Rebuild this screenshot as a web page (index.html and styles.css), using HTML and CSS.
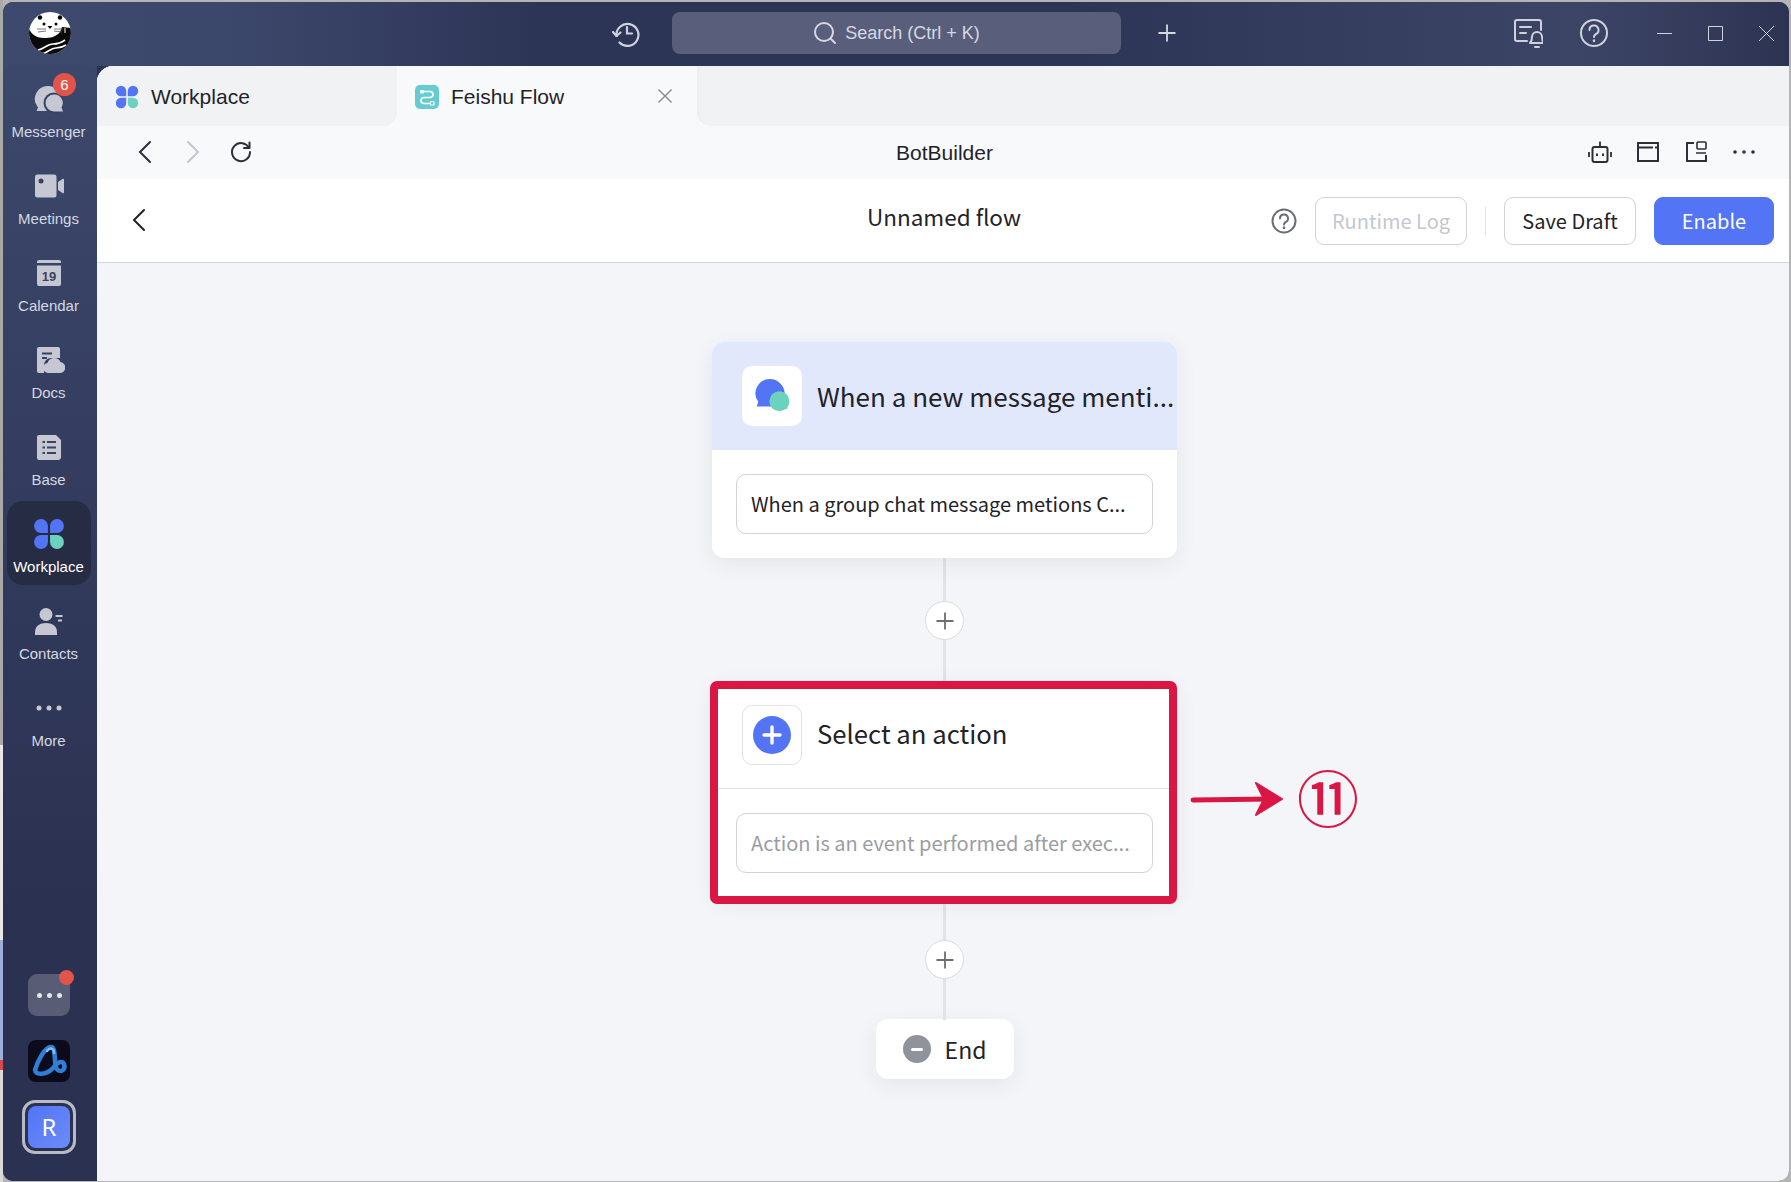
FILE: index.html
```html
<!DOCTYPE html>
<html lang="en">
<head>
<meta charset="UTF-8" />
<title>Feishu Flow - BotBuilder</title>
<link rel="stylesheet" href="styles.css">
</head>
<body>

<svg class="defs" width="0" height="0" aria-hidden="true">
  <symbol id="clover" viewBox="1 1 30 30">
    <path fill="#5274f5" d="M15 15H8.500A6.500 6.500 0 1 1 15 8.500Z" />
    <path fill="#5274f5" d="M17 15V8.500A6.500 6.500 0 1 1 23.500 15Z" />
    <path fill="#5274f5" d="M15 17V23.500A6.500 6.500 0 1 1 8.500 17Z" />
    <path fill="#6bd3bd" d="M17 17H23.500A6.500 6.500 0 1 1 17 23.500Z" />
  </symbol>
  <symbol id="chevron-left" viewBox="0 0 24 24">
    <path fill="none" stroke="currentColor" stroke-width="2" stroke-linecap="round" d="M17 2 7 12l10 10" />
  </symbol>
  <symbol id="plus" viewBox="0 0 20 20">
    <path fill="none" stroke="currentColor" stroke-width="1.800" d="M10 1.500v17M1.500 10h17" />
  </symbol>
  <clipPath id="logo-clip">
    <circle cx="21" cy="21" r="21" />
  </clipPath>
</svg>

<div class="window">

  <!-- Title bar -->
  <header class="titlebar">
    <svg class="logo" viewBox="0 0 42 42">
      <g clip-path="url(#logo-clip)">
        <rect width="42" height="42" fill="#fff" />
        <path fill="#0a0a0a" d="M0 17c3 6 8 9 15 9 6 0 12-1 16-6l2-5 9 1v26H0Z" />
        <path fill="#fff" d="M9 13c1-7 6-11 12-11s11 4 11 11c0 7-5 12-11 12S8 20 9 13Z" />
        <circle cx="11" cy="5.500" r="2.200" fill="#0a0a0a" />
        <circle cx="31" cy="5.500" r="2.200" fill="#0a0a0a" />
        <circle cx="15" cy="12" r="1.500" fill="#0a0a0a" />
        <circle cx="27" cy="12" r="1.500" fill="#0a0a0a" />
        <path fill="#0a0a0a" d="M18.500 14h5l-2.500 3Z" />
        <path fill="none" stroke="#555" stroke-width=".8" d="M8 17h9M9 20l8-1M34 17h-9M33 20l-8-1" />
        <path fill="none" stroke="#fff" stroke-width="1.600" d="M9 38c6-1 9-6 15-6 5 0 8-1 12-4M13 42c5-1 9-6 14-6 4 0 7-1 10-3" />
        <path fill="none" stroke="#fff" stroke-width="1" d="M36 16v5" />
      </g>
    </svg>
    <svg class="history-icon" viewBox="0 0 30 30" fill="none" stroke="#cfd2dc" stroke-width="2.200" stroke-linecap="round">
      <path d="M5.500 18A11 11 0 1 1 8.500 24.500" />
      <path d="M2 14l3.500 4 4-3.500" stroke-linejoin="round" />
      <path d="M16 9v6.500h5" />
    </svg>
    <div class="search">
      <svg viewBox="0 0 24 24" fill="none" stroke="#d5d8e2" stroke-width="2" stroke-linecap="round">
        <circle cx="11" cy="11" r="9" />
        <path d="M18 18l4 4" />
      </svg>
      <span>Search (Ctrl + K)</span>
    </div>
    <svg class="new-icon" viewBox="0 0 20 20">
      <use href="#plus" color="#d5d8e2" />
    </svg>
    <div class="titlebar-right">
      <svg class="bar-icon" viewBox="0 0 30 30" fill="none" stroke="#cfd2dc" stroke-width="2" stroke-linecap="round" stroke-linejoin="round">
        <path d="M14 23H4a2 2 0 0 1-2-2V4a2 2 0 0 1 2-2h22a2 2 0 0 1 2 2v8" />
        <path d="M7 9h11M7 15h6" />
        <path d="M17 25c1-1 2-2 2-6a5 5 0 0 1 10 0c0 4 1 5 2 6ZM22 29h4" />
      </svg>
      <svg class="bar-icon help" viewBox="0 0 30 30" fill="none" stroke="#cfd2dc" stroke-width="2" stroke-linecap="round">
        <circle cx="15" cy="15" r="13" />
        <path d="M10.500 12a4.500 4.500 0 1 1 6.500 4c-1.500.8-2 1.500-2 3" />
        <path d="M15 22.500v.5" stroke-width="2.400" />
      </svg>
      <svg class="win-btn minimize" viewBox="0 0 15 15" fill="none" stroke="#cfd2dc"><path d="M0 7.500h15" /></svg>
      <svg class="win-btn" viewBox="0 0 15 15" fill="none" stroke="#cfd2dc"><path d="M.5.500h14v14H.500Z" /></svg>
      <svg class="win-btn" viewBox="0 0 15 15" fill="none" stroke="#cfd2dc"><path d="M0 0l15 15M15 0 0 15" /></svg>
    </div>
  </header>

  <div class="below">

    <!-- Left navigation -->
    <nav class="sidebar">
      <div class="nav-item">
        <svg class="nav-icon" viewBox="0 0 32 32">
          <path fill="#c5c8d3" d="M15 3A13 13 0 0 0 5 24.500L3.500 28H16a13 13 0 0 0 12-12A13 13 0 0 0 15 3Z" />
          <circle cx="21" cy="20" r="10.500" fill="#39425f" />
          <path fill="#c5c8d3" d="M21 11.500a8.500 8.500 0 0 0 0 17h9l-1.500-4A8.500 8.500 0 0 0 21 11.500Z" />
        </svg>
        <span class="nav-label">Messenger</span>
        <span class="badge">6</span>
      </div>
      <div class="nav-item">
        <svg class="nav-icon" viewBox="0 0 32 32">
          <path fill="#c5c8d3" d="M2 7a2.500 2.500 0 0 1 2.500-2.500H21A2.500 2.500 0 0 1 23.500 7v18a2.500 2.500 0 0 1-2.500 2.500H4.500A2.500 2.500 0 0 1 2 25Z" />
          <path fill="#c5c8d3" d="M25 12l4.500-3c1-.6 1.500 0 1.500 1v12c0 1-.5 1.600-1.500 1L25 20Z" />
          <circle cx="8" cy="11" r="2.500" fill="#39425f" />
        </svg>
        <span class="nav-label">Meetings</span>
      </div>
      <div class="nav-item">
        <svg class="nav-icon" viewBox="0 0 32 32">
          <path fill="#c5c8d3" d="M4 5a2 2 0 0 1 2-2h20a2 2 0 0 1 2 2v1H4ZM4 8.500h24V27a2 2 0 0 1-2 2H6a2 2 0 0 1-2-2Z" />
          <text class="cal-day" x="16" y="24" text-anchor="middle">19</text>
        </svg>
        <span class="nav-label">Calendar</span>
      </div>
      <div class="nav-item">
        <svg class="nav-icon" viewBox="0 0 32 32">
          <path fill="#c5c8d3" d="M4 5a2 2 0 0 1 2-2h19a2 2 0 0 1 2 2v9H18a7 7 0 0 0-7 7v8H6a2 2 0 0 1-2-2Z" />
          <path fill="#c5c8d3" d="M15 29a5 5 0 0 1-.5-9.900A7 7 0 0 1 27.500 18 5.500 5.500 0 0 1 26 29Z" />
          <path stroke="#39425f" stroke-width="2" d="M9 9.500h10M9 14h5" />
        </svg>
        <span class="nav-label">Docs</span>
      </div>
      <div class="nav-item">
        <svg class="nav-icon" viewBox="0 0 32 32">
          <path fill="#c5c8d3" d="M6 4a2 2 0 0 0-2 2v21a2 2 0 0 0 2 2h19a3 3 0 0 0 3-3V9l-5-5Z" />
          <path stroke="#39425f" stroke-width="2.200" d="M9.500 11h2.500M14 11h9M9.500 16.500h2.500M14 16.500h9M9.500 22h2.500M14 22h9" />
        </svg>
        <span class="nav-label">Base</span>
      </div>
      <div class="nav-item active">
        <svg class="nav-icon"><use href="#clover" /></svg>
        <span class="nav-label">Workplace</span>
      </div>
      <div class="nav-item">
        <svg class="nav-icon" viewBox="0 0 32 32">
          <circle cx="13" cy="9.500" r="6.500" fill="#c5c8d3" />
          <path fill="#c5c8d3" d="M2 30v-3c0-6 5-9 11-9s11 3 11 9v3Z" />
          <path stroke="#c5c8d3" stroke-width="2" d="M22.500 11h7M25 15.500h4" />
        </svg>
        <span class="nav-label">Contacts</span>
      </div>
      <div class="nav-item">
        <svg class="nav-icon" viewBox="0 0 32 32" fill="#c5c8d3">
          <circle cx="6" cy="16" r="2.500" />
          <circle cx="16" cy="16" r="2.500" />
          <circle cx="26" cy="16" r="2.500" />
        </svg>
        <span class="nav-label">More</span>
      </div>

      <div class="dock">
        <div class="dock-more">
          <i></i><i></i><i></i>
          <span class="dock-dot"></span>
        </div>
        <svg class="dock-app" viewBox="0 0 42 42">
          <rect width="42" height="42" rx="8" fill="#0b0b1c" />
          <path fill="none" stroke="#2f7fd6" stroke-width="4.500" stroke-linecap="round" d="M7 30C10 20 17 7 23 7c5 0 3 14 5 20 1 4 5 5 7 3 3-3 1-8-2-8-4 0-6 4-10 8-5 4-15 6-16 0Z" />
          <path fill="none" stroke="#79c0f5" stroke-width="2.500" stroke-linecap="round" d="M19 11c3-4 7-3 7 2" />
        </svg>
        <div class="avatar-ring">
          <div class="avatar">R</div>
        </div>
      </div>
    </nav>

    <main class="main">

      <!-- Tabs -->
      <div class="tabs">
        <div class="tab">
          <svg class="tab-icon"><use href="#clover" /></svg>
          <span>Workplace</span>
        </div>
        <div class="tab tab-active">
          <svg class="tab-icon" viewBox="0 0 24 24">
            <rect width="24" height="24" rx="5" fill="#65ccd1" />
            <path fill="none" stroke="#fff" stroke-width="1.700" d="M9 6.500h6a3 3 0 0 1 0 6H9a3 3 0 0 0 0 6h6" />
            <rect x="5" y="5" width="4" height="3.500" rx=".8" fill="#fff" />
            <rect x="15.500" y="16.500" width="3.500" height="3.500" rx=".6" fill="#65ccd1" stroke="#fff" stroke-width="1.200" />
          </svg>
          <span>Feishu Flow</span>
          <svg class="tab-close" viewBox="0 0 14 14" fill="none" stroke="#85888e" stroke-width="1.400"><path d="M.5.500l13 13M13.500.500l-13 13" /></svg>
        </div>
        <div class="tabs-rest"></div>
      </div>

      <!-- Browser toolbar -->
      <div class="toolbar">
        <div class="toolbar-left">
          <svg class="tool-icon back"><use href="#chevron-left" /></svg>
          <svg class="tool-icon forward"><use href="#chevron-left" /></svg>
          <svg class="tool-icon" viewBox="0 0 24 24" fill="none" stroke="currentColor" stroke-width="2" stroke-linecap="round">
            <path d="M20 8a9 9 0 1 0 1 4" />
            <path d="M20.500 2.500V8H15" stroke-linejoin="round" />
          </svg>
        </div>
        <div class="toolbar-title">BotBuilder</div>
        <div class="toolbar-right">
          <svg class="tool-icon" viewBox="0 0 24 24" fill="none" stroke="currentColor" stroke-width="2">
            <rect x="4.500" y="7" width="15" height="15" rx="2" />
            <path d="M12 1.500V7M1 12v5M23 12v5" stroke-width="1.800" />
            <path d="M9 14.500v.5M15 14.500v.5" stroke-linecap="square" stroke-width="2" />
          </svg>
          <svg class="tool-icon" viewBox="0 0 24 24" fill="none" stroke="currentColor" stroke-width="2">
            <rect x="2" y="3" width="20" height="18" />
            <path d="M2 7.500h15M19 7.500h3" />
          </svg>
          <svg class="tool-icon" viewBox="0 0 24 24" fill="none" stroke="currentColor" stroke-width="2">
            <path d="M10 3H3v18h19v-6" />
            <rect x="13" y="2" width="9" height="7" rx="1" stroke-width="1.600" />
            <path d="M12 13h10" stroke-width="1.600" />
          </svg>
          <svg class="tool-icon" viewBox="0 0 24 24" fill="currentColor">
            <circle cx="3" cy="12" r="1.800" />
            <circle cx="12" cy="12" r="1.800" />
            <circle cx="21" cy="12" r="1.800" />
          </svg>
        </div>
      </div>

      <!-- Flow header -->
      <div class="flow-header">
        <svg class="flow-back"><use href="#chevron-left" /></svg>
        <div class="flow-name">Unnamed flow</div>
        <div class="flow-actions">
          <svg class="flow-help" viewBox="0 0 26 26" fill="none" stroke="#6b6e75" stroke-width="2" stroke-linecap="round">
            <circle cx="13" cy="13" r="11.500" />
            <path d="M9 10.500a4 4 0 1 1 5.800 3.500c-1.300.7-1.800 1.300-1.800 2.500" />
            <path d="M13 19.500v.5" stroke-width="2.400" />
          </svg>
          <button class="btn btn-log">Runtime Log</button>
          <span class="divider"></span>
          <button class="btn btn-draft">Save Draft</button>
          <button class="btn btn-primary">Enable</button>
        </div>
      </div>

      <!-- Flow canvas -->
      <div class="canvas">
        <section class="node">
          <div class="node-head node-head-trigger">
            <div class="node-icon">
              <svg viewBox="0 0 36 36">
                <path fill="#5274f5" d="M16 2a13.500 13.500 0 0 0-11 21.500L3.500 28H28a13.500 13.500 0 0 0 2-12A14 14 0 0 0 16 2Z" />
                <circle cx="25" cy="23" r="9.500" fill="#6bd3bd" />
                <path fill="#6bd3bd" d="M27 30h6l-1-4Z" />
              </svg>
            </div>
            <div class="node-title">When a new message menti...</div>
          </div>
          <div class="node-body">
            <div class="node-field">When a group chat message metions C...</div>
          </div>
        </section>

        <div class="connector">
          <button class="add-step"><svg viewBox="0 0 20 20"><use href="#plus" /></svg></button>
        </div>

        <section class="node">
          <div class="node-head node-head-empty">
            <div class="node-icon node-icon-outline">
              <svg viewBox="0 0 38 38">
                <circle cx="19" cy="19" r="19" fill="#5274f5" />
                <path stroke="#fff" stroke-width="3.400" stroke-linecap="round" d="M19 11v16M11 19h16" />
              </svg>
            </div>
            <div class="node-title">Select an action</div>
          </div>
          <div class="node-body">
            <div class="node-field node-field-empty">Action is an event performed after exec...</div>
          </div>
          <div class="highlight"></div>
          <svg class="note-arrow" viewBox="0 0 94 36" fill="none" stroke="#d91644" stroke-linecap="round" stroke-linejoin="round">
            <path stroke-width="5" d="M3 19 86 18" />
            <path fill="#d91644" stroke-width="2" d="M66 2 92 18 66 34l8-16Z" />
          </svg>
          <span class="note-number">⑪</span>
        </section>

        <div class="connector">
          <button class="add-step"><svg viewBox="0 0 20 20"><use href="#plus" /></svg></button>
        </div>

        <div class="end-node">
          <span class="end-icon"></span>
          <span>End</span>
        </div>
      </div>

    </main>
  </div>
</div>

</body>
</html>
```

FILE: styles.css
```css
* {
  box-sizing: border-box;
}

html, body {
  height: 100%;
}

body {
  margin: 0;
  overflow: hidden;
  padding: 2px 2px 1px 3px;
  font-family: "Liberation Sans", Arial, sans-serif;
  color: #1f2329;
  /* bits of the desktop behind the window, left edge only */
  background:
    linear-gradient(180deg, #a9a9a9 0, #a9a9a9 745px, #e8e8e8 745px, #e8e8e8 940px, #9db0d8 940px, #9db0d8 1060px, #d64a4a 1060px, #d64a4a 1070px, #d9d9d9 1070px) left top / 3px 100% no-repeat,
    #b4b4b4;
}

.defs {
  position: absolute;
}

.window {
  height: 100%;
  display: flex;
  flex-direction: column;
  border-radius: 10px;
  overflow: hidden;
  background: #2b3151;
}

/* Title bar */
.titlebar {
  height: 64px;
  flex: none;
  display: flex;
  align-items: center;
  padding: 0 15px 2px 26px;
  background: linear-gradient(90deg, #3e4a6d 0, #3c486b 12%, #2d3556 30%, #2d3556 60%, #3d4566 88%, #2d3353 100%);
}

.logo {
  width: 42px;
  height: 42px;
  flex: none;
}

.history-icon {
  width: 30px;
  height: 30px;
  flex: none;
  margin-left: 540px;
}

.search {
  width: 449px;
  height: 42px;
  flex: none;
  margin-left: 31px;
  border-radius: 8px;
  background: #595f7a;
  display: flex;
  align-items: center;
  justify-content: center;
  gap: 8px;
  color: #d5d8e2;
  font-size: 18px;
}

.search svg {
  width: 24px;
  height: 24px;
}

.new-icon {
  width: 20px;
  height: 20px;
  flex: none;
  margin-left: 36px;
}

.titlebar-right {
  margin-left: auto;
  display: flex;
  align-items: center;
}

.bar-icon {
  width: 30px;
  height: 30px;
}

.help {
  margin-left: 36px;
  margin-right: 48px;
}

.win-btn {
  width: 15px;
  height: 15px;
  margin-left: 36px;
}

.win-btn.minimize {
  margin-left: 0;
}

/* Left navigation */
.below {
  flex: 1;
  min-height: 0;
  display: flex;
}

.sidebar {
  width: 94px;
  flex: none;
  padding-left: 4px;
  padding-right: 6px;
  display: flex;
  flex-direction: column;
  gap: 3px;
  background: linear-gradient(180deg, #3c486b 0, #2b3151 75%);
}

.nav-item {
  height: 84px;
  flex: none;
  position: relative;
  padding: 17px 1px 0 0;
  border-radius: 16px;
  display: flex;
  flex-direction: column;
  align-items: center;
}

.nav-item.active {
  background: #262c44;
}

.nav-icon {
  width: 32px;
  height: 32px;
  display: block;
}

.nav-label {
  margin-top: 8px;
  line-height: 18px;
  font-size: 15px;
  color: #d5d8e2;
  white-space: nowrap;
}

.active .nav-label {
  color: #fff;
}

.cal-day {
  font: 700 13px "Liberation Sans", Arial, sans-serif;
  fill: #39425f;
}

.badge {
  position: absolute;
  top: 7px;
  left: 46px;
  width: 23px;
  height: 23px;
  border-radius: 50%;
  background: #e25449;
  color: #fff;
  font-size: 15px;
  line-height: 23px;
  text-align: center;
}

.dock {
  margin-top: auto;
  padding: 0 0 27px;
  display: flex;
  flex-direction: column;
  align-items: center;
}

.dock-more {
  width: 42px;
  height: 42px;
  position: relative;
  border-radius: 9px;
  background: #585d75;
  display: flex;
  align-items: center;
  justify-content: center;
  gap: 5px;
}

.dock-more i {
  width: 5px;
  height: 5px;
  border-radius: 50%;
  background: #e6e7ec;
}

.dock-dot {
  position: absolute;
  top: -4px;
  right: -4px;
  width: 15px;
  height: 15px;
  border-radius: 50%;
  background: #e25449;
}

.dock-app {
  width: 42px;
  height: 42px;
  margin-top: 24px;
}

.avatar-ring {
  width: 54px;
  height: 54px;
  margin-top: 18px;
  padding: 3px;
  border: 3px solid #b8bbc5;
  border-radius: 13px;
}

.avatar {
  height: 100%;
  border-radius: 8px;
  background: linear-gradient(135deg, #5274f5, #6d8cf8);
  color: #fff;
  font: 400 24px/42px "Noto Sans", sans-serif;
  text-align: center;
}

/* Main area */
.main {
  flex: 1;
  min-width: 0;
  display: flex;
  flex-direction: column;
  background: #f4f5f8;
  border-radius: 16px 0 0 0;
  overflow: hidden;
}

.tabs {
  height: 60px;
  flex: none;
  display: flex;
  background: #f8f9fb;
}

.tab {
  width: 300px;
  flex: none;
  display: flex;
  align-items: center;
  padding: 2px 0 0 18px;
  gap: 12px;
  background: #f1f2f4;
  border-bottom-right-radius: 14px;
  font-size: 21px;
  color: #1f2329;
}

.tab-active {
  background: #f8f9fb;
  border-radius: 14px 14px 0 0;
  position: relative;
}

.tab-icon {
  width: 24px;
  height: 24px;
  flex: none;
}

.tab-close {
  position: absolute;
  right: 25px;
  top: 23px;
  width: 14px;
  height: 14px;
}

.tabs-rest {
  flex: 1;
  background: #f1f2f4;
  border-bottom-left-radius: 14px;
  box-shadow: inset 6px 0 6px -6px rgba(0, 0, 0, 0.04);
}

.toolbar {
  height: 53px;
  flex: none;
  display: grid;
  grid-template-columns: minmax(0, 1fr) auto minmax(0, 1fr);
  align-items: center;
  padding: 0 33px 2px 36px;
  background: #f8f9fb;
}

.toolbar-left,
.toolbar-right {
  display: flex;
  align-items: center;
  gap: 24px;
  color: #2b2f36;
}

.toolbar-right {
  justify-content: flex-end;
}

.tool-icon {
  width: 24px;
  height: 24px;
  flex: none;
  color: #2b2f36;
}

.tool-icon.forward {
  color: #c4c6cb;
  transform: scaleX(-1);
}

.toolbar-title {
  margin-top: 2px;
  font-size: 21px;
  color: #1f2329;
}

.flow-header {
  height: 84px;
  flex: none;
  display: grid;
  grid-template-columns: minmax(0, 1fr) auto minmax(0, 1fr);
  align-items: center;
  padding: 0 15px 0 17px;
  background: #fff;
  border-bottom: 1px solid #d4d6da;
  font-family: "Noto Sans CJK SC", "Noto Sans", sans-serif;
}

.flow-back {
  width: 24px;
  height: 32px;
  margin: -2px 0 0 13px;
  color: #1f2329;
}

.flow-name {
  font-size: 22.500px;
  line-height: 32px;
  color: #1f2329;
  margin-top: -9px;
}

.flow-actions {
  display: flex;
  align-items: center;
  justify-content: flex-end;
}

.flow-help {
  width: 26px;
  height: 26px;
  flex: none;
  margin-right: 18px;
}

.btn {
  height: 48px;
  flex: none;
  padding: 0;
  border: 1px solid #d0d3d8;
  border-radius: 9px;
  background: #fff;
  font: 400 20px/30px "Noto Sans CJK SC", "Noto Sans", sans-serif;
  color: #1f2329;
}

.btn-log {
  width: 152px;
  color: #c4c7cc;
}

.btn-draft {
  width: 132px;
}

.btn-primary {
  margin-left: 18px;
  width: 120px;
  border-color: #5274f5;
  background: #5274f5;
  color: #fff;
}

.divider {
  width: 1px;
  height: 28px;
  margin: 0 18px;
  flex: none;
  background: #dfe1e5;
}

/* Flow canvas */
.canvas {
  flex: 1;
  padding: 79px 0 0 3px;
  display: flex;
  flex-direction: column;
  align-items: center;
  font-family: "Noto Sans CJK SC", "Noto Sans", sans-serif;
}

.node {
  width: 465px;
  height: 216px;
  flex: none;
  position: relative;
  z-index: 1;
  border-radius: 12px;
  background: #fff;
  box-shadow: 0 6px 22px rgba(30, 40, 70, 0.07);
}

.node-head {
  height: 108px;
  display: flex;
  align-items: center;
  gap: 15px;
  padding-left: 30px;
  border-radius: 12px 12px 0 0;
}

.node-head-trigger {
  background: #e2e8fc;
}

.node-head-empty {
  border-bottom: 1px solid #dfe1e5;
}

.node-icon {
  width: 60px;
  height: 60px;
  flex: none;
  display: flex;
  align-items: center;
  justify-content: center;
  border-radius: 10px;
  background: #fff;
}

.node-icon svg {
  width: 38px;
  height: 38px;
}

.node-icon-outline {
  border: 1px solid #dfe1e5;
}

.node-title {
  min-width: 0;
  flex: 1;
  padding-bottom: 1px;
  font-size: 26px;
  line-height: 36px;
  color: #1f2329;
  white-space: nowrap;
}

.node-head-empty .node-title {
  padding-bottom: 3px;
  font-size: 25.700px;
}

.node-body {
  padding: 24px;
}

.node-field {
  height: 60px;
  padding: 0 14px;
  border: 1px solid #d0d3d8;
  border-radius: 10px;
  font-size: 20px;
  line-height: 58px;
  color: #1f2329;
  white-space: nowrap;
}

.node-field-empty {
  color: #9a9da3;
}

/* Annotation drawn over the second node */
.highlight {
  position: absolute;
  top: 0;
  right: 0;
  bottom: -7px;
  left: -2px;
  border: 8.500px solid #d91644;
  border-radius: 7px;
}

.note-arrow {
  position: absolute;
  left: 478px;
  top: 100px;
  width: 94px;
  height: 36px;
}

.note-number {
  position: absolute;
  left: 585px;
  top: 70px;
  font: 500 62px/90px "Noto Sans CJK SC", sans-serif;
  color: #d91644;
}

.connector {
  width: 3px;
  height: 123px;
  flex: none;
  position: relative;
  background: #e1e3e7;
}

.add-step {
  position: absolute;
  top: 43px;
  left: -18px;
  width: 39px;
  height: 39px;
  padding: 0;
  border: 1px solid #d9dbe0;
  border-radius: 50%;
  background: #fff;
  color: #6b6f76;
  display: flex;
  align-items: center;
  justify-content: center;
}

.add-step svg {
  width: 20px;
  height: 20px;
}

.end-node {
  width: 138px;
  height: 60px;
  flex: none;
  margin-top: -1px;
  display: flex;
  align-items: center;
  justify-content: center;
  gap: 14px;
  border-radius: 12px;
  background: #fff;
  box-shadow: 0 6px 22px rgba(30, 40, 70, 0.07);
  font-size: 23px;
  line-height: 30px;
  color: #1f2329;
}

.end-icon {
  width: 28px;
  height: 28px;
  position: relative;
  border-radius: 50%;
  background: #90939c;
}

.end-icon::after {
  content: "";
  position: absolute;
  left: 8px;
  top: 12.500px;
  width: 12px;
  height: 3px;
  border-radius: 2px;
  background: #fff;
}
```
